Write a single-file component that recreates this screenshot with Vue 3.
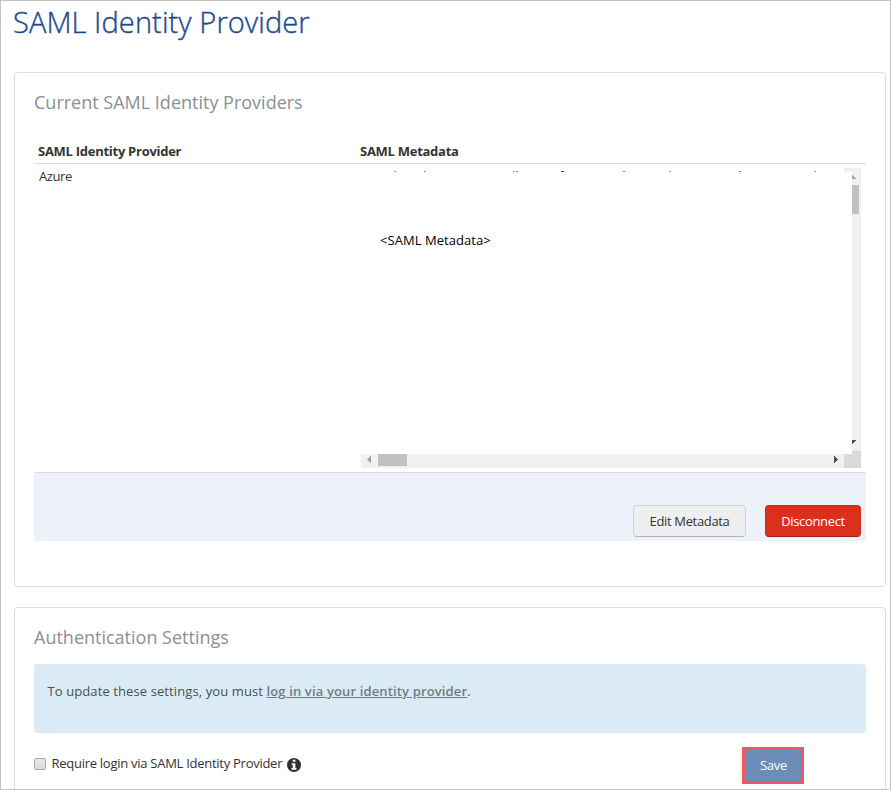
<script setup>
const clippedMarks = [
  { x: 33, w: 2, c: '#6f9fb8' }, { x: 63, w: 2, c: '#7f93a8' },
  { x: 152, w: 2, c: '#9aa8b8' }, { x: 155, w: 2, c: '#7892a8' },
  { x: 200, w: 3, c: '#4a4548' }, { x: 262, w: 2, c: '#6f9cc0' },
  { x: 308, w: 2, c: '#8b8f80' }, { x: 378, w: 2, c: '#8a7c80' },
  { x: 453, w: 2, c: '#8fa090' },
]
</script>

<template>
  <div class="page">
    <h1>SAML Identity Provider</h1>

    <section class="panel providers">
      <h2>Current SAML Identity Providers</h2>
      <div class="table">
        <div class="row head">
          <div>SAML Identity Provider</div>
          <div class="col-meta">SAML Metadata</div>
        </div>
        <div class="row body">
          <div class="name">Azure</div>
          <div class="metadata">
            <svg class="scroll" width="500" height="300" shape-rendering="crispEdges">
              <rect v-for="m in clippedMarks" :key="m.x" :x="m.x" y="3" :width="m.w" height="1" :fill="m.c" />
              <path d="M483 0h17v283h-9V4h-8zM0 286h483v14H0z" fill="#f0f0f0" />
              <path d="M491 283h9v17h-17v-14h8z" fill="#dadada" />
              <path d="M491 17h7v29h-7zM17 286h29v12H17z" fill="#c1c1c1" />
              <path d="M491 7h1v1h1v1h1v1h1v1h-4zM10 288v7h-1v-1H8v-1H7v-1H6v-1h1v-1h1v-1h1v-1z" fill="#a3a3a3" />
              <path d="M491 272h4v1h-1v1h-1v1h-1v1h-1zM473 288h1v1h1v1h1v1h1v1h-1v1h-1v1h-1v1h-1z" fill="#505050" />
            </svg>
            <span class="placeholder">&lt;SAML Metadata&gt;</span>
          </div>
        </div>
        <div class="actions">
          <button class="btn edit">Edit Metadata</button>
          <button class="btn danger">Disconnect</button>
        </div>
      </div>
    </section>

    <section class="panel settings">
      <h2 class="auth">Authentication Settings</h2>
      <div class="alert">
        <span>To update these settings, you must </span><a>log in via your identity provider</a><span>.</span>
      </div>
      <div class="form">
        <label class="require">
          <i class="checkbox"></i>
          <span class="label">Require login via SAML Identity Provider</span>
          <svg class="info" width="14" height="14" viewBox="0 0 14 14">
            <circle cx="7" cy="7" r="7" fill="#2f2f2f" />
            <path d="M5.7 1.8h2.7v2H5.7zM4.6 5.2h3.8v4.9h1.1v1.6h-5v-1.6h1.2V6.8H4.6z" fill="#fff" />
          </svg>
        </label>
        <button class="save">Save</button>
      </div>
    </section>
  </div>
</template>

<style>
body { margin: 0; background: #fff; }
</style>

<style scoped>
* { box-sizing: border-box; }
.page {
  width: 891px; height: 790px; overflow: hidden;
  border: 1px solid #c3c3c3; background: #fff; color: #333;
  padding: 0 4px 0 13px;
  font: 13px/18px "Open Sans", "Noto Sans", sans-serif;
}
span, a { white-space: pre; }
h1 { margin: 0 0 0 -1px; height: 71px; font-size: 29px; line-height: 42px; font-weight: 300; letter-spacing: 0.09px; color: #1c4a8d; -webkit-text-stroke: 0.35px #1c4a8d; }
h2 { margin: 0; font-size: 18px; line-height: 24px; font-weight: 400; color: #8a9094; }
.panel { width: 872px; border: 1px solid #dcdcdc; border-radius: 4px; padding: 0 19px; }
.providers { height: 515px; padding-top: 17px; }
.settings { height: 200px; margin-top: 20px; padding-top: 17px; }
.table { margin-top: 28px; }
.row { display: grid; grid-template-columns: 322px 1fr; }
.head { height: 22px; padding-left: 4px; border-bottom: 1px solid #dcdcdc; font-weight: 700; line-height: 18px; letter-spacing: -0.27px; }
.body { height: 308px; padding: 4px 5px 0 5px; }
.name { line-height: 16px; letter-spacing: -0.4px; }
.metadata { position: relative; width: 500px; height: 300px; }
.scroll { display: block; }
.placeholder { position: absolute; left: 19px; top: 63px; color: #000; letter-spacing: 0.05px; }
.actions {
  height: 69px; border-top: 1px solid #dcdcdc; background: #edf2fa;
  display: flex; justify-content: flex-end; gap: 19px; padding: 32px 5px 0 0;
}
.btn {
  height: 32px; padding: 0; border-radius: 4px; font: inherit; letter-spacing: -0.34px;
  display: flex; align-items: center; justify-content: center;
}
.edit { width: 113px; background: #efefef; border: 1px solid #d2d4d6; border-bottom-color: #b0b2b4; color: #333; }
.danger { width: 96px; background: #db301b; border: 1px solid #c62e1c; border-bottom-color: #9e2213; color: #fff; }
.alert { height: 69px; margin-top: 15px; padding: 18px 13.5px; border-radius: 4px; background: #daebf5; color: #4a4f53; letter-spacing: 0.1px; }
.alert a { color: #747b80; font-weight: 600; letter-spacing: 0.14px; text-decoration: underline; }
.form { display: flex; justify-content: space-between; padding: 14px 62px 0 0; }
.require { display: flex; height: 18px; margin-top: 8px; }
.checkbox { width: 12px; height: 12px; margin: 3px 5.5px 0 0; border: 1px solid #aaa; border-radius: 2px; background: linear-gradient(#e9e9e9, #dadada); }
.label { margin-top: -1px; letter-spacing: -0.27px; }
.info { margin: 3px 0 0 4.5px; }
.save { width: 62px; height: 37px; padding: 0 0 2px 1px; border: 3px solid #f15560; background: #6b8db8; color: #fff; font: inherit; letter-spacing: -0.25px; }
</style>
